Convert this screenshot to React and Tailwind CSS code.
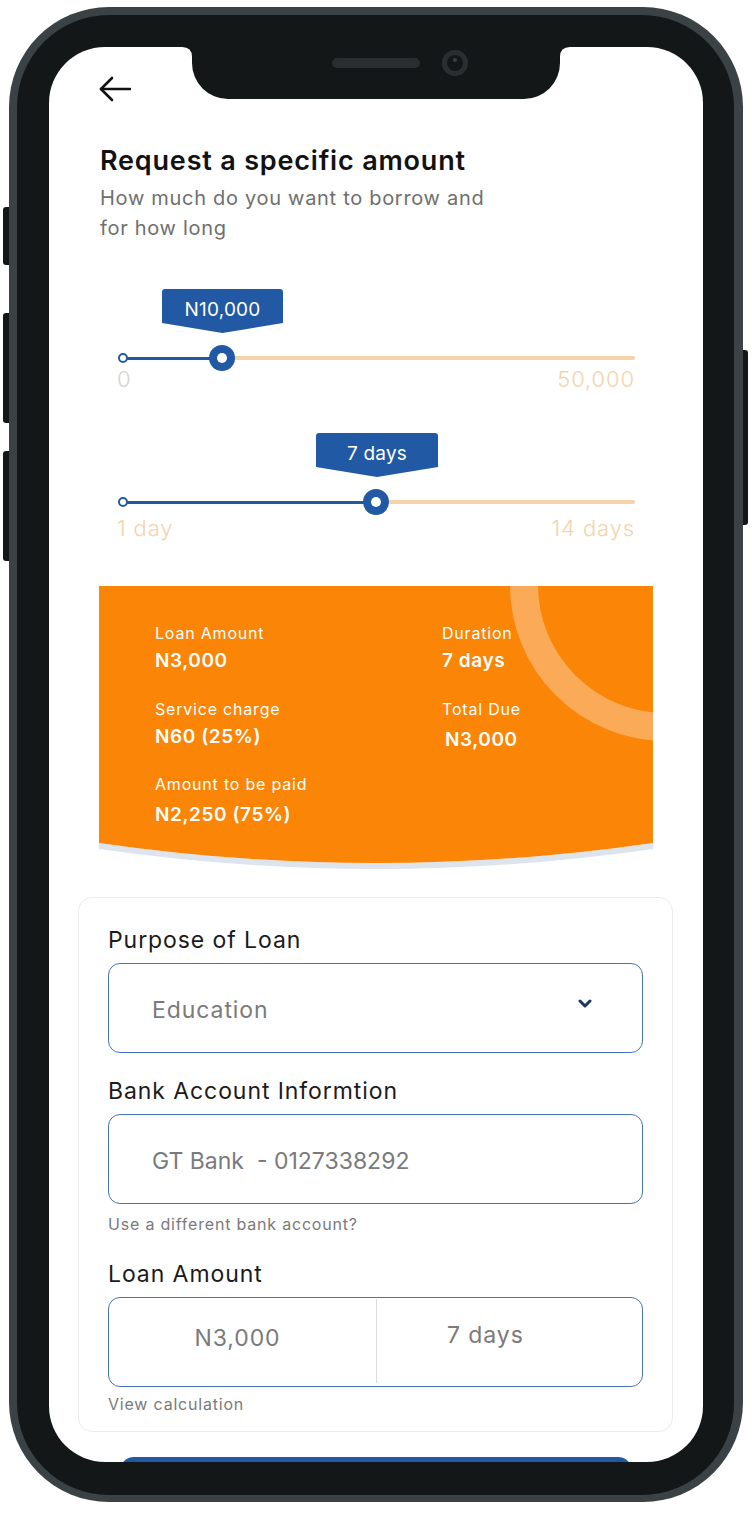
const blue = "bg-[#2159a4]";

const Tooltip = ({ label, left, width }) => (
  <div
    className={`absolute top-0 h-[44px] ${blue} text-white text-[19px] leading-[42px] tracking-[0.01em] text-center [clip-path:polygon(0_0,100%_0,100%_77%,50%_100%,0_77%)] rounded-t-[3px]`}
    style={{ left, width }}
  >
    {label}
  </div>
);

const Slider = ({ value, thumb, tipLeft, tipWidth, min, max, minColor, labelGap }) => (
  <div className="relative ml-[68px] w-[518px]">
    <div className="relative h-[56px]">
      <Tooltip label={value} left={tipLeft} width={tipWidth} />
    </div>
    <div className="relative h-[26px]">
      <div className="absolute top-[11px] h-[4px] rounded-full bg-[#f4d3ab]" style={{ left: thumb, right: 0 }} />
      <div className="absolute top-[11.5px] h-[3px] bg-[#2159a4]" style={{ left: 6, width: thumb - 6 }} />
      <div className="absolute left-[1px] top-[8px] w-[10px] h-[10px] rounded-full border-2 border-[#2159a4] bg-white" />
      <div
        className="absolute top-0 w-[26px] h-[26px] rounded-full bg-[#2159a4] flex items-center justify-center"
        style={{ left: thumb - 13 }}
      >
        <div className="w-[10px] h-[10px] rounded-full bg-white" />
      </div>
    </div>
    <div className={`${labelGap} flex justify-between text-[22px] leading-[22px] font-light tracking-[0.04em]`}>
      <span className={minColor}>{min}</span>
      <span className="text-[#f4d3ab]">{max}</span>
    </div>
  </div>
);

const Stat = ({ label, value, className = "" }) => (
  <div className={className}>
    <div className="text-[16px] leading-[20px] tracking-[0.05em] text-white">{label}</div>
    <div className="mt-[5px] text-[19px] leading-[26px] font-semibold tracking-[0.03em] text-white">{value}</div>
  </div>
);

const Field = ({ children }) => (
  <div className="h-[90px] rounded-[12px] border border-[#4473b6] flex items-center pt-[5px] pl-[43px] pr-[50px] text-[23px] tracking-[0.04em] text-[#7a7a7a]">
    {children}
  </div>
);

const FormLabel = ({ className = "", children }) => (
  <div className={`${className} text-[23px] leading-[30px] tracking-[0.04em] text-[#1b1b1b]`}>{children}</div>
);

export default function App() {
  return (
    <div className="relative min-h-screen bg-white pt-[7px] pl-[9px] font-['Inter',sans-serif]">
      {/* side buttons */}
      <div className="absolute left-[3px] top-[207px] w-[6px] h-[58px] rounded-l-[3px] bg-[#141718]" />
      <div className="absolute left-[3px] top-[313px] w-[6px] h-[110px] rounded-l-[3px] bg-[#141718]" />
      <div className="absolute left-[3px] top-[451px] w-[6px] h-[110px] rounded-l-[3px] bg-[#141718]" />
      <div className="absolute left-[743px] top-[350px] w-[5px] h-[175px] rounded-r-[3px] bg-[#141718]" />

      <div className="w-[734px] h-[1495px] rounded-[100px] bg-[#3b4245] pt-[8px] pl-[8px] pr-[9px] pb-[7px]">
        <div className="h-full rounded-[92px] bg-[#141718] pt-[32px] pl-[32px] pr-[31px] pb-[33px]">
          <div className="relative h-full rounded-[56px] bg-white overflow-hidden">
            {/* notch */}
            <svg className="absolute left-[133px] top-0" width="388" height="52" viewBox="0 0 388 52">
              <path
                d="M0 0 H388 Q378 0 378 10 V16 A36 36 0 0 1 342 52 H46 A36 36 0 0 1 10 16 V10 Q10 0 0 0 Z"
                fill="#141718"
              />
              <rect x="150" y="11" width="88" height="10" rx="5" fill="#2a2e31" />
              <circle cx="273" cy="16" r="13" fill="#2a2e31" />
              <circle cx="273" cy="16" r="8" fill="#141718" />
              <circle cx="273" cy="13" r="2" fill="#3a3f42" />
            </svg>

            <div className="pt-[29px] pl-[50px]">
              <svg width="32" height="26" viewBox="0 0 32 26" fill="none" stroke="#111" strokeWidth="2.6" strokeLinecap="round" strokeLinejoin="round">
                <path d="M2 13 H31" />
                <path d="M13 2 L2 13 L13 24" />
              </svg>
            </div>

            <div className="pl-[51px]">
              <h1 className="mt-[43px] text-[27px] leading-[32px] font-semibold tracking-[0.03em] text-[#121212]">Request a specific amount</h1>
              <p className="mt-[6px] text-[20px] leading-[30px] tracking-[0.035em] text-[#6f6f6f] w-[400px]">
                How much do you want to borrow and for how long
              </p>
            </div>

            <div className="mt-[46px]">
              <Slider value="N10,000" thumb={105} tipLeft={45} tipWidth={121} min="0" max="50,000" minColor="text-[#d3d3d3]" labelGap="-mt-[3px]" />
            </div>
            <div className="mt-[43px]">
              <Slider value="7 days" thumb={259} tipLeft={199} tipWidth={122} min="1 day" max="14 days" minColor="text-[#f4d3ab]" labelGap="mt-[2px]" />
            </div>

            {/* summary card */}
            <div className="mt-[47px] ml-[50px] w-[554px]">
              <div className="relative h-[257px] bg-[#fa8506] overflow-hidden pl-[56px] pt-[37px]">
                <div className="absolute left-[411px] top-[-157px] w-[312px] h-[312px] rounded-full border-[28px] border-[#fbab57]" />
                <div className="relative grid grid-cols-[287px_1fr]">
                  <Stat label="Loan Amount" value="N3,000" />
                  <Stat label="Duration" value="7 days" />
                  <Stat label="Service charge" value="N60 (25%)" className="mt-[25px]" />
                  <Stat label="Total Due" value="N3,000" className="mt-[25px] [&>div:last-child]:ml-[3px] [&>div:last-child]:mt-[8px]" />
                  <Stat label="Amount to be paid" value="N2,250 (75%)" className="mt-[21px] [&>div:last-child]:mt-[8px]" />
                </div>
              </div>
              <svg className="block" width="554" height="26" viewBox="0 0 554 26">
                <path d="M0 0 Q277 40 554 0 V6 Q277 46 0 6 Z" fill="#dde4ee" />
                <path d="M0 0 H554 Q277 40 0 0 Z" fill="#fa8506" />
              </svg>
            </div>

            {/* form */}
            <div className="mt-[28px] ml-[29px] w-[595px] rounded-[14px] border border-[#ececec] px-[29px] pt-[27px] pb-[17px]">
              <FormLabel>Purpose of Loan</FormLabel>
              <div className="mt-[8px]">
                <Field>
                  <span className="flex-1">Education</span>
                  <svg width="14" height="10" viewBox="0 0 14 10" fill="none" stroke="#1d3765" strokeWidth="3" strokeLinecap="round" strokeLinejoin="round" className="-mt-[13px]">
                    <path d="M2 2 L7 7 L12 2" />
                  </svg>
                </Field>
              </div>
              <FormLabel className="mt-[23px]">Bank Account Informtion</FormLabel>
              <div className="mt-[8px]">
                <Field>
                  <span className="whitespace-pre tracking-normal">GT Bank  - 0127338292</span>
                </Field>
              </div>
              <div className="mt-[10px] text-[16px] leading-[20px] tracking-[0.05em] text-[#7a7a7a]">Use a different bank account?</div>
              <FormLabel className="mt-[25px]">Loan Amount</FormLabel>
              <div className="mt-[8px] h-[90px] rounded-[12px] border border-[#4473b6] flex text-[23px] tracking-[0.04em] text-[#7a7a7a]">
                <div className="w-[267px] flex items-center justify-center pr-[10px] pb-[8px]">N3,000</div>
                <div className="w-px mt-[1px] mb-[3px] bg-[#dcdcdc]" />
                <div className="flex-1 flex items-center pl-[70px] pb-[14px]">7 days</div>
              </div>
              <div className="mt-[7px] text-[16px] leading-[20px] tracking-[0.05em] text-[#7a7a7a]">View calculation</div>
            </div>

            <div className="mt-[25px] ml-[71px] w-[512px] h-[56px] rounded-[14px] bg-[#2159a4]" />
          </div>
        </div>
      </div>
    </div>
  );
}
